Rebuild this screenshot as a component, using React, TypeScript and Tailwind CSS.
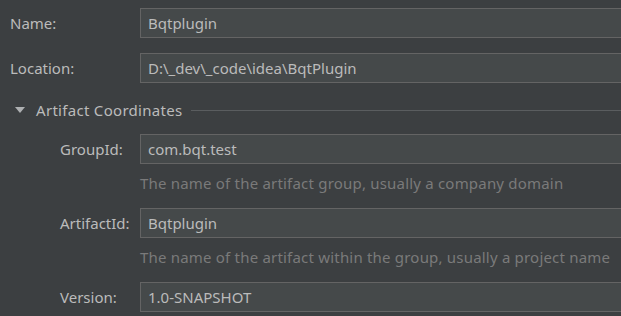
import React from "react";

const font = { fontFamily: '"Noto Sans", "Open Sans", sans-serif' };

const Field = ({ value }: { value: string }) => (
  <div className="flex h-[30px] w-[500px] shrink-0 items-center border border-[#646464] bg-[#45494a] pl-[7px] text-[15px] text-[#bbbbbb]">
    {value}
  </div>
);

const Row = ({
  label,
  value,
  indent = false,
  className = "",
}: {
  label: string;
  value: string;
  indent?: boolean;
  className?: string;
}) => (
  <div className={`flex h-[30px] items-center ${className}`}>
    <div
      className={`shrink-0 text-[15px] text-[#bbbbbb] ${
        indent ? "w-[80px] ml-[60px]" : "w-[130px] ml-[10px]"
      }`}
    >
      {label}
    </div>
    <Field value={value} />
  </div>
);

const Hint = ({ text }: { text: string }) => (
  <div className="ml-[140px] mt-[9px] flex h-[20px] items-center text-[15px] tracking-[0.2px] text-[#7a7a7a]">
    {text}
  </div>
);

export default function App() {
  return (
    <div
      className="h-[316px] w-[621px] overflow-hidden bg-[#3c3f41] pt-[8px] antialiased"
      style={font}
    >
      <Row label="Name:" value="Bqtplugin" />
      <Row label="Location:" value="D:\_dev\_code\idea\BqtPlugin" className="mt-[15px]" />

      <div className="mt-[15px] flex h-[24px] items-center">
        <svg className="ml-[15px] h-[6px] w-[10px]" viewBox="0 0 10 6">
          <polygon points="0,0 10,0 5,6" fill="#aeb0b2" />
        </svg>
        <span className="ml-[11px] text-[15px] tracking-[0.3px] text-[#bbbbbb]">
          Artifact Coordinates
        </span>
        <div className="ml-[8px] h-px flex-1 bg-[#5a5d5f]" />
      </div>

      <Row label="GroupId:" value="com.bqt.test" indent className="mt-[12px]" />
      <Hint text="The name of the artifact group, usually a company domain" />
      <Row label="ArtifactId:" value="Bqtplugin" indent className="mt-[15px]" />
      <Hint text="The name of the artifact within the group, usually a project name" />
      <Row label="Version:" value="1.0-SNAPSHOT" indent className="mt-[15px]" />
    </div>
  );
}
